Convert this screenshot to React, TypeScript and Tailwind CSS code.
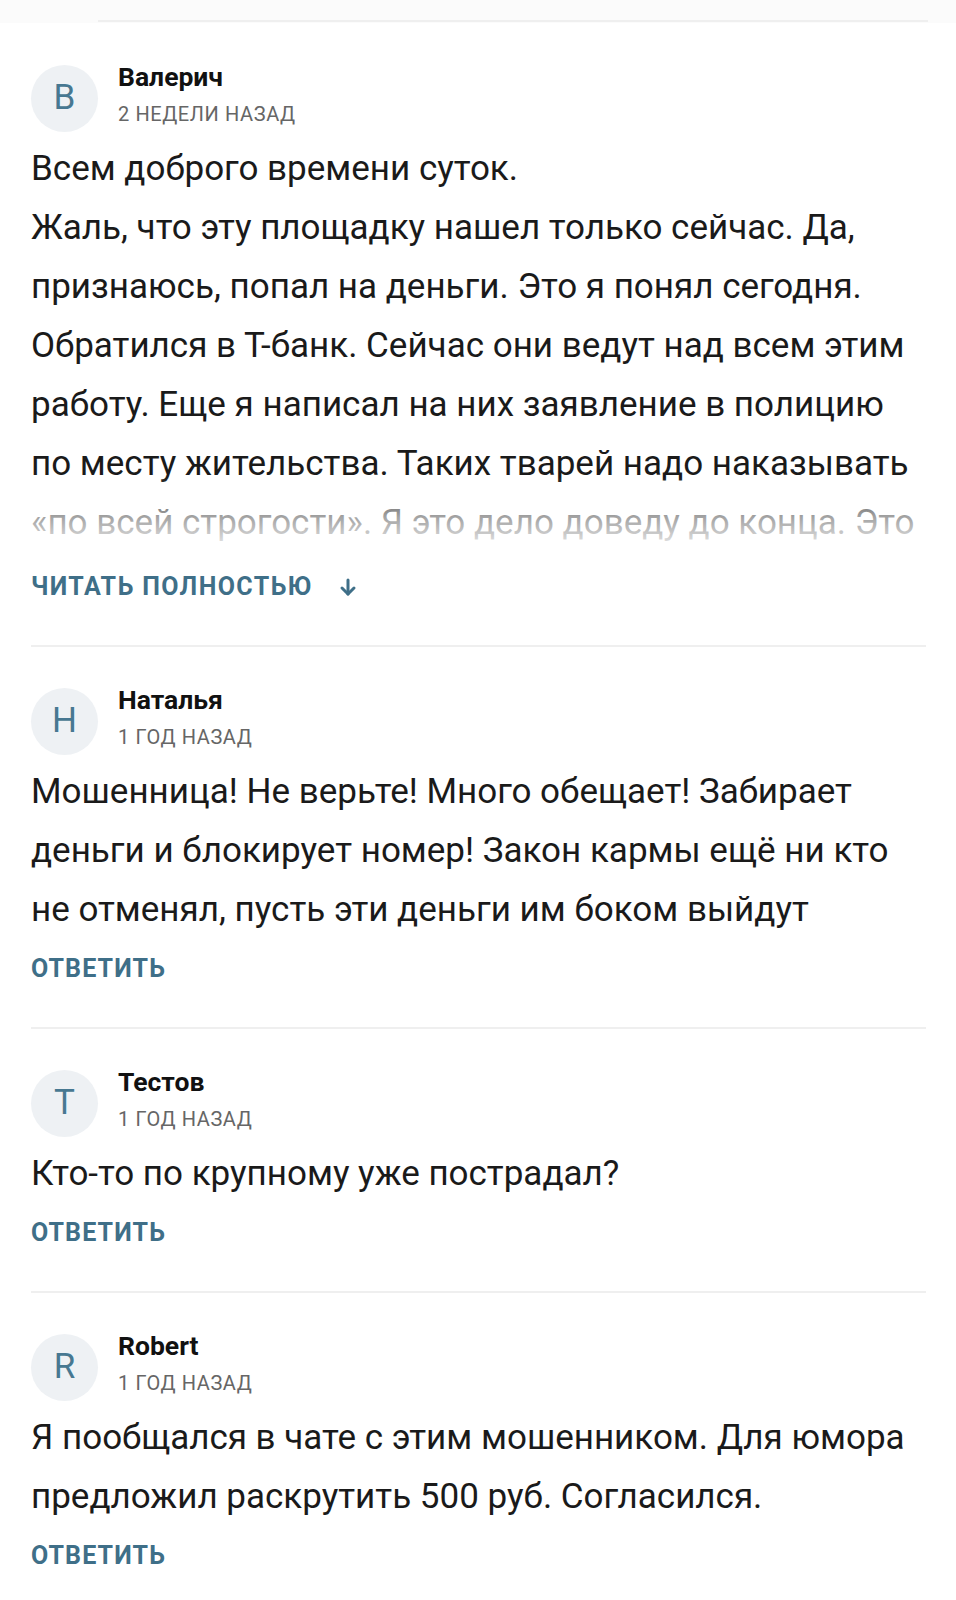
import React from "react";

const ACCENT = "text-[#3f6f88]";

function Avatar({ letter }: { letter: string }) {
  return (
    <div className="flex h-[67px] w-[67px] shrink-0 items-center justify-center rounded-full bg-[#eef1f4] text-[35px] text-[#477891]">
      {letter}
    </div>
  );
}

function Header({ letter, name, date }: { letter: string; name: string; date: string }) {
  return (
    <div className="flex items-start gap-[20px]">
      <Avatar letter={letter} />
      <div className="flex flex-col">
        <div className="text-[26.5px] font-bold leading-[24px] text-[#111111]">{name}</div>
        <div className="mt-[13px] text-[20px] leading-[24px] tracking-[0.6px] text-[#666666]">{date}</div>
      </div>
    </div>
  );
}

function Body({ lines }: { lines: string[] }) {
  return (
    <div className="mt-[7px] text-[35px] leading-[59px] text-[#1a1a1a]">
      {lines.map((l, i) => (
        <div key={i} className="whitespace-nowrap">
          {l}
        </div>
      ))}
    </div>
  );
}

function Action({ children }: { children: React.ReactNode }) {
  return (
    <div className={`mt-[16px] flex items-center text-[25px] font-bold uppercase leading-[28px] tracking-[1.1px] ${ACCENT}`}>
      {children}
    </div>
  );
}

export default function App() {
  return (
    <div className="min-h-[1600px] bg-white" style={{ fontFamily: "Roboto, 'Noto Sans', sans-serif" }}>
      <div className="h-[23px] bg-[#fbfbfb]">
        <div className="ml-[98px] mr-[28px] h-[22px] border-b-2 border-[#efefef]" />
      </div>
      <div className="pl-[31px] pr-[30px]">
        {/* Comment 1 */}
        <div className="border-b-2 border-[#efefef] pt-[42px] pb-[44px]">
          <Header letter="В" name="Валерич" date="2 НЕДЕЛИ НАЗАД" />
          <div className="relative mt-[7px] h-[418px] overflow-hidden text-[35px] leading-[59px] text-[#1a1a1a]">
            <div className="whitespace-nowrap">Всем доброго времени суток.</div>
            <div className="whitespace-nowrap">Жаль, что эту площадку нашел только сейчас. Да,</div>
            <div className="whitespace-nowrap">признаюсь, попал на деньги. Это я понял сегодня.</div>
            <div className="whitespace-nowrap">Обратился в Т-банк. Сейчас они ведут над всем этим</div>
            <div className="whitespace-nowrap">работу. Еще я написал на них заявление в полицию</div>
            <div className="whitespace-nowrap">по месту жительства. Таких тварей надо наказывать</div>
            <div className="whitespace-nowrap">«по всей строгости». Я это дело доведу до конца. Это</div>
            <div className="pointer-events-none absolute bottom-0 left-0 right-0 h-[80px] bg-gradient-to-b from-white/0 via-white/60 to-white" />
          </div>
          <div className={`mt-[16px] flex items-center text-[25px] font-bold uppercase leading-[28px] tracking-[1.4px] ${ACCENT}`}>
            Читать полностью
            <svg className="ml-[26px]" width="18" height="20" viewBox="0 0 18 20" fill="none" stroke="currentColor" strokeWidth="3" strokeLinecap="round" strokeLinejoin="round">
              <path d="M9 3v14" />
              <path d="M3 11l6 6 6-6" />
            </svg>
          </div>
        </div>

        {/* Comment 2 */}
        <div className="border-b-2 border-[#efefef] pt-[41px] pb-[44px]">
          <Header letter="Н" name="Наталья" date="1 ГОД НАЗАД" />
          <Body
            lines={[
              "Мошенница! Не верьте! Много обещает! Забирает",
              "деньги и блокирует номер! Закон кармы ещё ни кто",
              "не отменял, пусть эти деньги им боком выйдут",
            ]}
          />
          <Action>Ответить</Action>
        </div>

        {/* Comment 3 */}
        <div className="border-b-2 border-[#efefef] pt-[41px] pb-[44px]">
          <Header letter="Т" name="Тестов" date="1 ГОД НАЗАД" />
          <Body lines={["Кто-то по крупному уже пострадал?"]} />
          <Action>Ответить</Action>
        </div>

        {/* Comment 4 */}
        <div className="pt-[41px] pb-[40px]">
          <Header letter="R" name="Robert" date="1 ГОД НАЗАД" />
          <Body
            lines={[
              "Я пообщался в чате с этим мошенником. Для юмора",
              "предложил раскрутить 500 руб. Согласился.",
            ]}
          />
          <Action>Ответить</Action>
        </div>
      </div>
    </div>
  );
}
